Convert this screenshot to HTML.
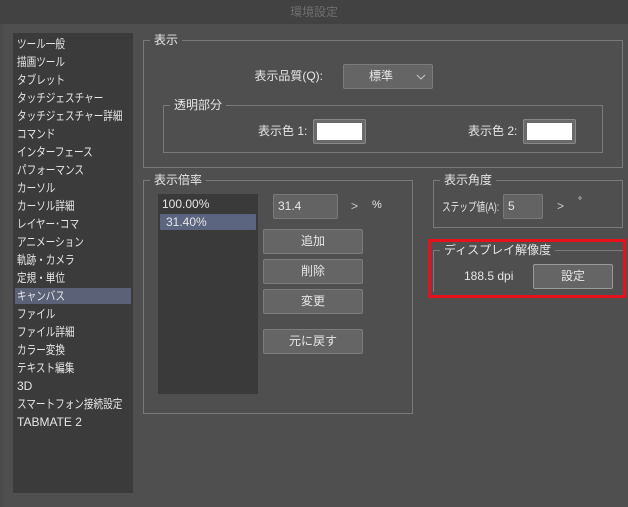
<!DOCTYPE html><html><head><meta charset="utf-8"><style>
*{margin:0;padding:0;box-sizing:border-box}
body{width:628px;height:507px;background:#4b4b4b;font-family:"Liberation Sans","Noto Sans CJK JP",sans-serif;font-size:12px;color:#e6e6e6;position:relative;overflow:hidden}
.a{position:absolute}
.title{left:0;top:0;width:628px;height:24px;background:#424242;color:#6e6e6e;text-align:center;line-height:24px;font-size:12px}
.main{left:3px;top:24px;width:625px;height:483px;background:#4f4f4f}
.side{left:13px;top:33px;width:120px;height:460px;background:#3b3b3b}
.it{position:absolute;left:4px;height:16px;line-height:16px;white-space:nowrap}
.it span{display:inline-block;transform:scaleX(0.8);transform-origin:0 50%}
.sel{background:#5b6278;left:2px;width:116px;padding-left:2px;border-radius:1px}
.g{border:1px solid #7a7a7a}
.gt{position:absolute;background:#4f4f4f;padding:0 4px;line-height:14px;top:-8px;left:6px}
.btn{background:#656565;border:1px solid #7c7c7c;border-radius:2px;text-align:center;line-height:22px}
.inp{background:#636363;border:1px solid #7a7a7a;border-radius:2px;padding-left:4px;line-height:22px}
</style></head><body>
<div class="a title">環境設定</div>
<div class="a main"></div>
<div class="a side">
<div class="it" style="top:3px"><span>ツール一般</span></div>
<div class="it" style="top:21px"><span>描画ツール</span></div>
<div class="it" style="top:39px"><span>タブレット</span></div>
<div class="it" style="top:57px"><span>タッチジェスチャー</span></div>
<div class="it" style="top:75px"><span>タッチジェスチャー詳細</span></div>
<div class="it" style="top:93px"><span>コマンド</span></div>
<div class="it" style="top:111px"><span>インターフェース</span></div>
<div class="it" style="top:129px"><span>パフォーマンス</span></div>
<div class="it" style="top:147px"><span>カーソル</span></div>
<div class="it" style="top:165px"><span>カーソル詳細</span></div>
<div class="it" style="top:183px"><span>レイヤー･コマ</span></div>
<div class="it" style="top:201px"><span>アニメーション</span></div>
<div class="it" style="top:219px"><span>軌跡・カメラ</span></div>
<div class="it" style="top:237px"><span>定規・単位</span></div>
<div class="it sel" style="top:255px"><span>キャンバス</span></div>
<div class="it" style="top:273px"><span>ファイル</span></div>
<div class="it" style="top:291px"><span>ファイル詳細</span></div>
<div class="it" style="top:309px"><span>カラー変換</span></div>
<div class="it" style="top:327px"><span>テキスト編集</span></div>
<div class="it" style="top:345px">3D</div>
<div class="it" style="top:363px"><span>スマートフォン接続設定</span></div>
<div class="it" style="top:381px">TABMATE 2</div>
</div>

<div class="a g" style="left:143px;top:40px;width:480px;height:128px"><span class="gt">表示</span></div>
<div class="a" style="left:250px;top:68px;width:73px;text-align:right;line-height:16px">表示品質(Q):</div>
<div class="a btn" style="left:343px;top:64px;width:90px;height:25px;line-height:23px;padding-right:14px">標準<svg style="position:absolute;right:6px;top:9px" width="10" height="6" viewBox="0 0 10 6"><path d="M1 1L5 5L9 1" fill="none" stroke="#bbb" stroke-width="1.2"/></svg></div>
<div class="a g" style="left:163px;top:105px;width:440px;height:48px"><span class="gt">透明部分</span></div>
<div class="a" style="left:258px;top:123px;line-height:16px">表示色 1:</div>
<div class="a" style="left:313px;top:119px;width:53px;height:25px;background:#6a6a6a;border:1px solid #888;border-radius:2px;padding:3px"><div style="background:#fff;width:100%;height:100%"></div></div>
<div class="a" style="left:468px;top:123px;line-height:16px">表示色 2:</div>
<div class="a" style="left:523px;top:119px;width:53px;height:25px;background:#6a6a6a;border:1px solid #888;border-radius:2px;padding:3px"><div style="background:#fff;width:100%;height:100%"></div></div>

<div class="a g" style="left:143px;top:180px;width:270px;height:234px"><span class="gt">表示倍率</span></div>
<div class="a" style="left:158px;top:194px;width:100px;height:200px;background:#3a3a3a">
<div class="it" style="left:4px;top:2px">100.00%</div>
<div class="it" style="left:2px;top:20px;width:96px;background:#5c6580;padding-left:6px;border-radius:1px">31.40%</div>
</div>
<div class="a inp" style="left:273px;top:194px;width:65px;height:25px">31.4</div>
<div class="a" style="left:351px;top:199px;color:#ccc">&gt;</div>
<div class="a" style="left:372px;top:199px;font-size:11px">%</div>
<div class="a btn" style="left:263px;top:229px;width:100px;height:25px">追加</div>
<div class="a btn" style="left:263px;top:259px;width:100px;height:25px">削除</div>
<div class="a btn" style="left:263px;top:289px;width:100px;height:25px">変更</div>
<div class="a btn" style="left:263px;top:329px;width:100px;height:25px">元に戻す</div>

<div class="a g" style="left:433px;top:180px;width:190px;height:48px"><span class="gt">表示角度</span></div>
<div class="a" style="left:442px;top:198px;white-space:nowrap;transform:scaleX(0.72);transform-origin:0 50%">ステップ値(A):</div>
<div class="a inp" style="left:503px;top:194px;width:40px;height:25px">5</div>
<div class="a" style="left:557px;top:199px;color:#ccc">&gt;</div>
<div class="a" style="left:578px;top:196px;font-size:10px">°</div>

<div class="a" style="left:428px;top:239px;width:198px;height:59px;border:3px solid #e8101c"></div>
<div class="a g" style="left:433px;top:250px;width:190px;height:42px;border-right:none;border-bottom:none"><span class="gt">ディスプレイ解像度</span></div>
<div class="a" style="left:464px;top:268px;line-height:16px">188.5 dpi</div>
<div class="a btn" style="left:533px;top:264px;width:80px;height:25px;border-color:#999">設定</div>
</body></html>
